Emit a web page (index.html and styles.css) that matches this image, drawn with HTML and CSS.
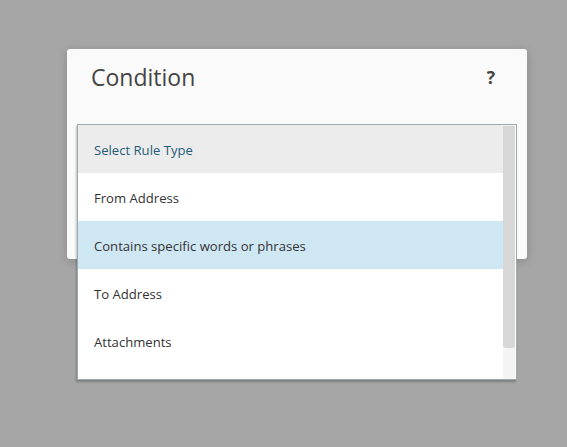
FILE: index.html
```html
<!DOCTYPE html>
<html>
<head>
<meta charset="utf-8">
<link rel="stylesheet" href="styles.css">
</head>
<body>
<div class="overlay">
  <div class="dialog">
    <div class="dialog-header">
      <h1 class="title">Condition</h1>
      <span class="help">?</span>
    </div>
    <div class="menu">
      <div class="menu-list">
        <div class="item header">Select Rule Type</div>
        <div class="item">From Address</div>
        <div class="item selected">Contains specific words or phrases</div>
        <div class="item">To Address</div>
        <div class="item">Attachments</div>
      </div>
      <div class="scrollbar"><div class="thumb"></div></div>
    </div>
  </div>
</div>
</body>
</html>
```
FILE: styles.css
```css
html, body {
  margin: 0;
  padding: 0;
  height: 100%;
}
body {
  background: #a6a6a6;
  font-family: "Open Sans", "Noto Sans", sans-serif;
  overflow: hidden;
}
.overlay {
  padding: 49px 0 0 67px;
}
.dialog {
  position: relative;
  width: 460px;
  height: 210px;
  background: #fafafa;
  border-radius: 3px;
  box-shadow: 0 2px 10px rgba(0,0,0,0.18);
}
.dialog-header {
  display: flex;
  justify-content: space-between;
  align-items: center;
  padding: 12px 32px 0 24px;
  height: 32px;
}
.title {
  margin: 0;
  font-weight: 400;
  font-size: 23px;
  color: #444444;
}
.help {
  font-size: 17.5px;
  font-weight: 700;
  color: #444444;
}
.menu {
  position: absolute;
  left: 10px;
  top: 75px;
  width: 438px;
  height: 254px;
  background: #ffffff;
  border: 1px solid #9aabb0;
  box-shadow: -1px 2px 2px rgba(0,0,0,0.25);
  display: flex;
}
.menu-list {
  flex: 1;
}
.item {
  height: 48px;
  display: flex;
  align-items: center;
  padding: 1px 0 0 16px;
  box-sizing: border-box;
  font-size: 13.1px;
  color: #333333;
}
.item.header {
  background: #ececec;
  color: #1f5c78;
}
.item.selected {
  background: #cfe6f3;
}
.scrollbar {
  width: 12px;
  margin-right: 1px;
  background: #f4f4f4;
  padding-top: 1px;
}
.thumb {
  height: 222px;
  background: #d7d7d7;
  border-radius: 0 0 3px 3px;
}
```
